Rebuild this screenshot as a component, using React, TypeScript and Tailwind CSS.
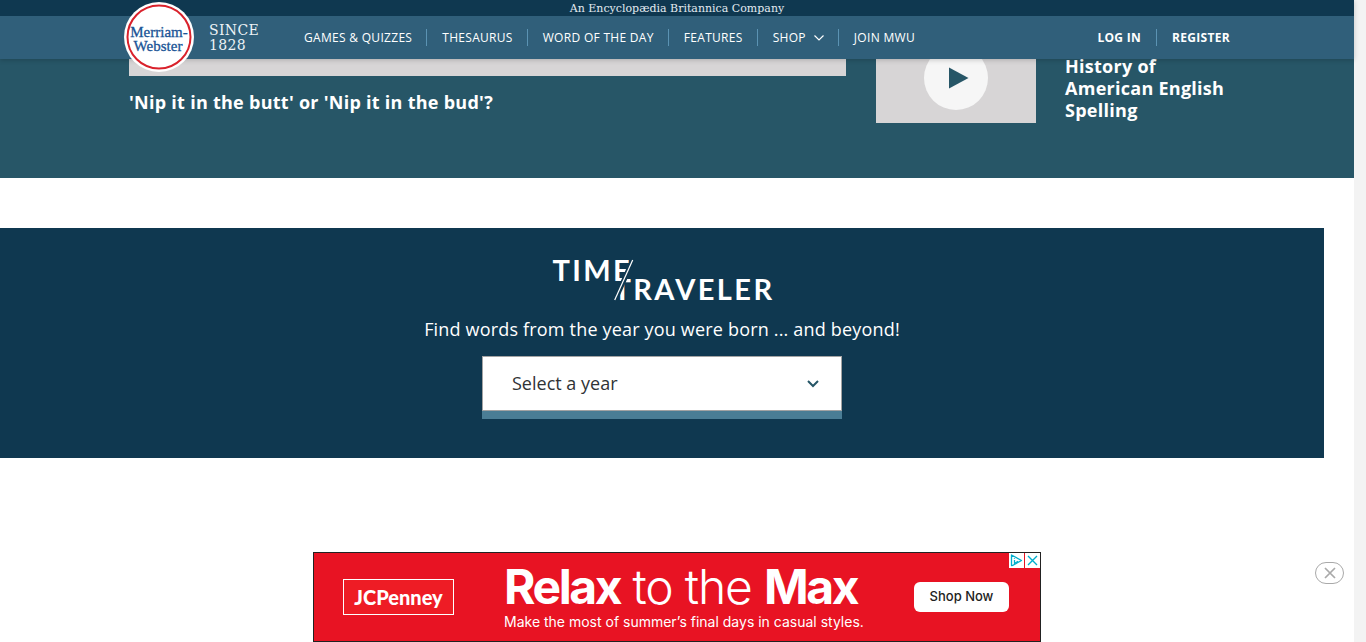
import React from "react";

const navItems = ["Games & Quizzes", "Thesaurus", "Word of the Day", "Features", "Shop", "Join MWU"];

function Logo() {
  return (
    <svg viewBox="0 0 70 70" className="size-[70px]" role="img" aria-label="Merriam-Webster">
      <circle cx="35" cy="35" r="35" fill="#fff" />
      <circle cx="35" cy="35" r="31.5" fill="none" stroke="#d9212b" strokeWidth="2" />
      <g
        fill="#1a5496"
        stroke="#1a5496"
        strokeWidth="0.3"
        fontFamily="'Liberation Serif', serif"
        fontSize="15"
        textAnchor="middle"
      >
        <text x="35" y="35">Merriam-</text>
        <text x="34" y="49">Webster</text>
      </g>
    </svg>
  );
}

function Header() {
  return (
    <header className="sticky top-0 z-10 shadow-[0_1px_5px_rgba(0,0,0,0.2)]">
      <p className="h-4 bg-[#0f3850] pt-px text-center font-['DejaVu_Serif',serif] text-[11px] leading-[15px] text-[#e3ebf0]">
        An Encyclopædia Britannica Company
      </p>
      <div className="bg-[#305f7a]">
        <div className="relative mx-auto flex h-[43px] max-w-[1106px] items-center">
          <a href="#home" className="absolute -top-3.5 left-0">
            <Logo />
          </a>
          <p className="ml-[85px] w-[80px] font-['DejaVu_Serif',serif] text-[14px] leading-[15px] tracking-wide text-[#edf3f6]">
            SINCE
            <br />
            1828
          </p>
          <nav className="flex items-center">
            {navItems.map((item, i) => (
              <a
                key={item}
                href="#nav"
                className={
                  "flex h-[17px] items-center pr-3.5 pl-[15px] text-[12px] uppercase leading-[17px] tracking-wide whitespace-nowrap text-white " +
                  (i === 0 ? "" : "border-l border-[#5b93b3]")
                }
              >
                {item}
                {item === "Shop" && (
                  <svg viewBox="0 0 10 6" className="ml-2 h-1.5 w-2.5" fill="none" stroke="#fff" strokeWidth="1.2">
                    <path d="M0.5 0.5 L5 5 L9.5 0.5" />
                  </svg>
                )}
              </a>
            ))}
          </nav>
          <div className="ml-auto flex items-center text-[12px] leading-[17px] font-bold tracking-wide text-white">
            <a href="#login" className="pr-[15px]">LOG IN</a>
            <a href="#register" className="border-l border-[#5b93b3] pl-[15px]">REGISTER</a>
          </div>
        </div>
      </div>
    </header>
  );
}

function Videos() {
  return (
    <section className="-mt-[26px] bg-[#275667] pb-[55px] text-white">
      <div className="mx-auto flex max-w-[1096px] gap-[30px]">
        <a href="#video" className="block flex-1">
          <div className="h-[43px] bg-[#d7d5d6]" />
          <h3 className="mt-[15px] text-[18px] leading-[22px] font-bold tracking-[0.015em]">
            'Nip it in the butt' or 'Nip it in the bud'?
          </h3>
        </a>
        <a href="#video" className="flex w-[349px] gap-[29px]">
          <div className="flex h-[90px] w-40 shrink-0 items-center justify-center bg-[#d7d5d6]">
            <svg viewBox="0 0 64 64" className="size-16">
              <circle cx="32" cy="32" r="32" fill="#f6f6f6" />
              <path d="M25 21.5 L44.5 32 L25 42.5 Z" fill="#275667" />
            </svg>
          </div>
          <h3 className="pt-[22px] text-[18px] leading-[22px] font-bold tracking-[0.015em] whitespace-nowrap">
            History of
            <br />
            American English
            <br />
            Spelling
          </h3>
        </a>
      </div>
    </section>
  );
}

function TimeTravelerTitle() {
  return (
    <svg viewBox="0 0 224 42" className="h-[42px] w-[224px]" role="img" aria-label="Time Traveler">
      <clipPath id="above">
        <path d="M0 0 H80.5 L62 42 H0 Z" />
      </clipPath>
      <clipPath id="below">
        <path d="M86 0 H224 V42 H67.5 Z" />
      </clipPath>
      <g fill="#fff" fontFamily="Lato, sans-serif" fontWeight="700" fontSize="29" letterSpacing="2.4">
        <text x="2.5" y="22" clipPath="url(#above)">TIME</text>
        <text x="63.5" y="41" clipPath="url(#below)">TRAVELER</text>
      </g>
      <path d="M82.7 1 L64.7 41" stroke="#fff" strokeWidth="1.2" />
    </svg>
  );
}

function TimeTraveler() {
  return (
    <section className="mt-[50px] mr-[30px] flex h-[230px] flex-col items-center bg-[#0f3850] pt-[31px]">
      <TimeTravelerTitle />
      <label htmlFor="year" className="mt-4 text-[18px] leading-6 tracking-[0.01em] text-white">
        Find words from the year you were born ... and beyond!
      </label>
      <div className="relative mt-[15px] w-[360px] border-b-8 border-[#4a7d95]">
        <select
          id="year"
          className="block h-[55px] w-full appearance-none rounded-none border border-[#a3a3a3] bg-white pl-[29px] text-[18px] text-[#303336]"
        >
          <option>Select a year</option>
        </select>
        <svg
          viewBox="0 0 12 8"
          className="pointer-events-none absolute top-6 right-[23px] h-2 w-3"
          fill="none"
          stroke="#265667"
          strokeWidth="2"
        >
          <path d="M1 1 L6 6 L11 1" />
        </svg>
      </div>
    </section>
  );
}

function Banner() {
  return (
    <aside className="relative mt-auto flex justify-center pt-[94px]">
      <div className="relative flex h-[90px] w-[728px] items-center border border-[#222] bg-[#e81323] text-white">
        <div className="ml-[29px] flex h-9 w-[111px] items-center justify-center border border-white bg-[#ee1c25] font-[Lato,sans-serif] text-[20px] font-black">
          JCPenney
        </div>
        <div className="ml-[50px] w-[410px] font-[Inter,sans-serif] whitespace-nowrap">
          <p className="text-[48px] leading-[50px] font-light tracking-tight">
            <b className="font-bold tracking-tighter">Relax</b> to the <b className="font-bold tracking-tighter">Max</b>
          </p>
          <p className="text-[14px] leading-[20px]">
            Make the most of summer’s final days in casual styles.
          </p>
        </div>
        <button className="h-[30px] w-[95px] rounded-md bg-white font-[Inter,sans-serif] text-[13px] font-medium text-[#222]">
          Shop Now
        </button>
        <div className="absolute top-0 right-0 flex gap-px">
          <a href="#choices" aria-label="Ad choices" className="bg-white">
            <svg viewBox="0 0 15 15" className="size-[15px]" fill="none" stroke="#00aecd" strokeWidth="1.3">
              <path d="M2.5 2 L12.5 7.5 L4 12.3 L2.5 12.5 Z" strokeLinejoin="round" />
              <path d="M5.5 5 V5.8 M5.5 7 V10.5 L9 8.2" />
            </svg>
          </a>
          <button aria-label="Close ad" className="bg-white">
            <svg viewBox="0 0 15 15" className="size-[15px]" fill="none" stroke="#00aecd" strokeWidth="1.4">
              <path d="M3 3 L12 12 M12 3 L3 12" />
            </svg>
          </button>
        </div>
      </div>
      <button
        aria-label="Close"
        className="absolute right-2.5 bottom-[58px] flex h-[22px] w-[29px] items-center justify-center rounded-[11px] border border-[#a9a9a9] bg-white"
      >
        <svg viewBox="0 0 12 12" className="size-3" fill="none" stroke="#a9a9a9" strokeWidth="1.7">
          <path d="M1 1 L11 11 M11 1 L1 11" />
        </svg>
      </button>
    </aside>
  );
}

export default function App() {
  return (
    <div className="flex min-h-screen bg-white font-['Open_Sans',sans-serif]">
      <main className="flex min-w-0 flex-1 flex-col">
        <Header />
        <Videos />
        <TimeTraveler />
        <Banner />
      </main>
      <div className="w-3 shrink-0 bg-[#f3f3f3]" />
    </div>
  );
}
